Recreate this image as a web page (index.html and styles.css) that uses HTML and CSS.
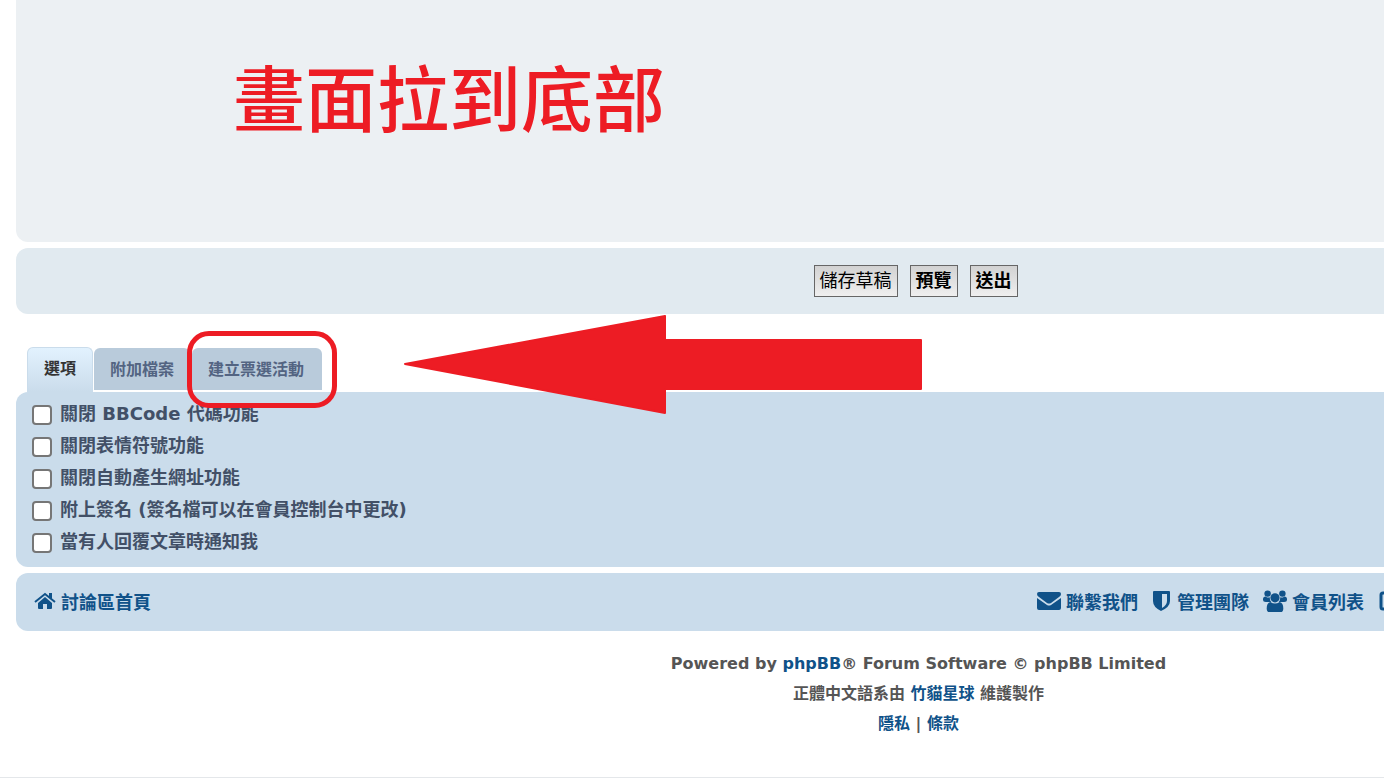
FILE: index.html
```html
<!DOCTYPE html>
<html lang="zh-Hant">
<head>
  <meta charset="UTF-8">
  <meta name="viewport" content="width=device-width, initial-scale=1.0">
  <title>討論區</title>
  <link rel="stylesheet" href="styles.css">
</head>
<body>

<div class="wrap">
  <div class="panel message">
    <p class="note">畫面拉到底部</p>
  </div>

  <form class="posting">
    <div class="panel submit">
      <button type="button">儲存草稿</button>
      <button type="button" class="main">預覽</button>
      <button type="submit" class="main">送出</button>
    </div>

    <div class="tabs">
      <a href="#options" class="tab active">選項</a>
      <a href="#attach" class="tab">附加檔案</a>
      <a href="#poll" class="tab poll">建立票選活動<span class="ring"></span></a>
      <svg class="arrow" width="520" height="100" viewBox="0 0 520 100">
        <path d="M2 49 L262 1 V25 H518 V74 H262 V98 Z" fill="#ed1c24" stroke="#ed1c24" stroke-width="2" stroke-linejoin="round"/>
      </svg>
    </div>

    <div class="panel options" id="options">
      <label><input type="checkbox"> 關閉 BBCode 代碼功能</label>
      <label><input type="checkbox"> 關閉表情符號功能</label>
      <label><input type="checkbox"> 關閉自動產生網址功能</label>
      <label><input type="checkbox"> 附上簽名 (簽名檔可以在會員控制台中更改)</label>
      <label><input type="checkbox"> 當有人回覆文章時通知我</label>
    </div>
  </form>

  <nav class="panel navbar">
    <a href="#" class="home">
      <svg width="22" height="20" viewBox="0 0 22 20"><path d="M11 6 L18 12 V17 Q18 18 17 18 H13 V13 H9 V18 H5 Q4 18 4 17 V12 Z"/><path d="M1 11 L11 3 L21 11" fill="none" stroke="currentColor" stroke-width="2"/><path d="M15 2 H18 V8 L15 6 Z"/></svg>
      討論區首頁
    </a>
    <a href="#">
      <svg width="24" height="20" viewBox="0 0 24 20"><path d="M0 3 Q0 1 2 1 H22 Q24 1 24 3 Q24 5 22 6 L14 12 Q12 13 10 12 L2 6 Q0 5 0 3 Z"/><path d="M0 7 L10 14 Q12 15 14 14 L24 7 V17 Q24 19 22 19 H2 Q0 19 0 17 Z"/></svg>
      聯繫我們
    </a>
    <a href="#">
      <svg width="20" height="20" viewBox="0 0 20 20"><path fill-rule="evenodd" d="M2 0 H17 Q18 0 18 1 V10 Q18 16 9 20 Q1 16 1 10 V1 Q1 0 2 0 Z M10 3 V17 Q15 14 15 10 V3 Z"/></svg>
      管理團隊
    </a>
    <a href="#">
      <svg width="24" height="24" viewBox="0 0 26 24"><circle cx="5" cy="4" r="3.500"/><circle cx="21" cy="4" r="3.500"/><path d="M0 12 V10 Q0 7 3 7 Q5 9 7.500 8 Q7 11 9 13 H3 Q0 13 0 11 Z M26 12 V10 Q26 7 23 7 Q21 9 18.500 8 Q19 11 17 13 H23 Q26 13 26 11 Z"/><circle cx="13" cy="8.500" r="5"/><path d="M8 13 Q13 16.500 18 13 Q22 14 22 20 Q22 24 19 24 H7 Q4 24 4 20 Q4 14 8 13 Z"/></svg>
      會員列表
    </a>
    <a href="#" aria-label="編輯">
      <svg width="22" height="20" viewBox="0 0 22 20"><path d="M17 2 H5 Q3 2 3 4 V16 Q3 18 5 18 H16 Q18 18 18 16 V12" fill="none" stroke="currentColor" stroke-width="3"/><path d="M8 11 L18 1 L21 4 L11 14 H8 Z"/></svg>
    </a>
  </nav>

  <footer class="copyright">
    <p>Powered by <a href="#">phpBB</a>® Forum Software © phpBB Limited</p>
    <p>正體中文語系由 <a href="#">竹貓星球</a> 維護製作</p>
    <p><a href="#">隱私</a> | <a href="#">條款</a></p>
  </footer>
</div>
<hr>

</body>
</html>
```
FILE: styles.css
```css
* {
  box-sizing: border-box;
}

body {
  margin: 0;
  overflow: hidden;
  background: #fff;
  color: #536482;
  font-family: "DejaVu Sans", "Noto Sans CJK TC", sans-serif;
  font-size: 18px;
}

a {
  color: #105289;
  text-decoration: none;
}

hr {
  margin: 0;
  border: 0;
  border-top: 1px solid #e4e7ea;
}

/* the forum is wider than the window and runs off the right side */
.wrap {
  margin: 0 -437px 0 16px;
}

.panel {
  border-radius: 12px;
  margin-bottom: 6px;
}

.message {
  height: 242px;
  padding: 46px 217px;
  background: #ecf0f3;
  border-radius: 0 0 12px 12px;
}

.note {
  margin: 0;
  color: #ed1c24;
  font-family: "Noto Sans CJK TC", sans-serif;
  font-size: 72px;
  font-weight: 500;
  line-height: 98px;
}

.submit {
  display: flex;
  justify-content: center;
  align-items: center;
  gap: 12px;
  height: 66px;
  padding-right: 6px;
  margin-bottom: 33px;
  background: #e1eaf0;
}

.submit button {
  height: 32px;
  padding: 0 5px;
  border: 1px solid #666;
  background: linear-gradient(#d2d2d2, #efefef);
  color: #000;
  font-family: inherit;
  font-size: 18px;
  line-height: 28px;
}

.submit .main {
  font-weight: bold;
}

.tabs {
  position: relative;
  display: flex;
  align-items: flex-start;
  gap: 1px;
  height: 45px;
  padding-left: 11px;
}

.tab {
  height: 42px;
  margin-top: 1px;
  padding: 0 16px;
  border-radius: 6px 6px 0 0;
  background: #b9cbdb;
  color: #536482;
  font-size: 16px;
  font-weight: bold;
  line-height: 44px;
}

.active {
  height: 45px;
  margin-top: 0;
  border: 1px solid #cadceb;
  border-bottom: 0;
  background: linear-gradient(#e2f2fe, #cadceb);
  color: #333;
  line-height: 42px;
}

.poll {
  position: relative;
  margin-left: 1px;
  padding: 0 18px 0 16px;
}

.ring {
  position: absolute;
  top: -17px;
  right: -15px;
  bottom: -18px;
  left: -5px;
  border: 5px solid #ed1c24;
  border-radius: 22px;
  z-index: 1;
}

.arrow {
  position: absolute;
  top: -32px;
  left: 387px;
}

.options {
  padding: 7px 16px 8px;
  background: #cadceb;
}

.options label {
  display: flex;
  align-items: flex-start;
  gap: 8px;
  width: fit-content;
  height: 32px;
  color: #425067;
  font-size: 18px;
  font-weight: bold;
  line-height: 30px;
}

.options input {
  appearance: none;
  width: 20px;
  height: 20px;
  margin: 6px 0 0;
  border: 2px solid #767676;
  border-radius: 4px;
  background: #fff;
}

.navbar {
  display: flex;
  align-items: center;
  gap: 14px;
  height: 58px;
  padding: 0 421px 2px 18px;
  background: #cadceb;
  font-weight: bold;
}

.navbar a {
  display: flex;
  align-items: center;
  gap: 5px;
}

.navbar svg {
  fill: currentColor;
}

.navbar .home {
  margin-right: auto;
}

.copyright {
  padding: 12px 0 38px;
  color: #555;
  font-size: 16px;
  font-weight: bold;
  text-align: center;
}

.copyright p {
  margin: 0;
  line-height: 30px;
}
```
